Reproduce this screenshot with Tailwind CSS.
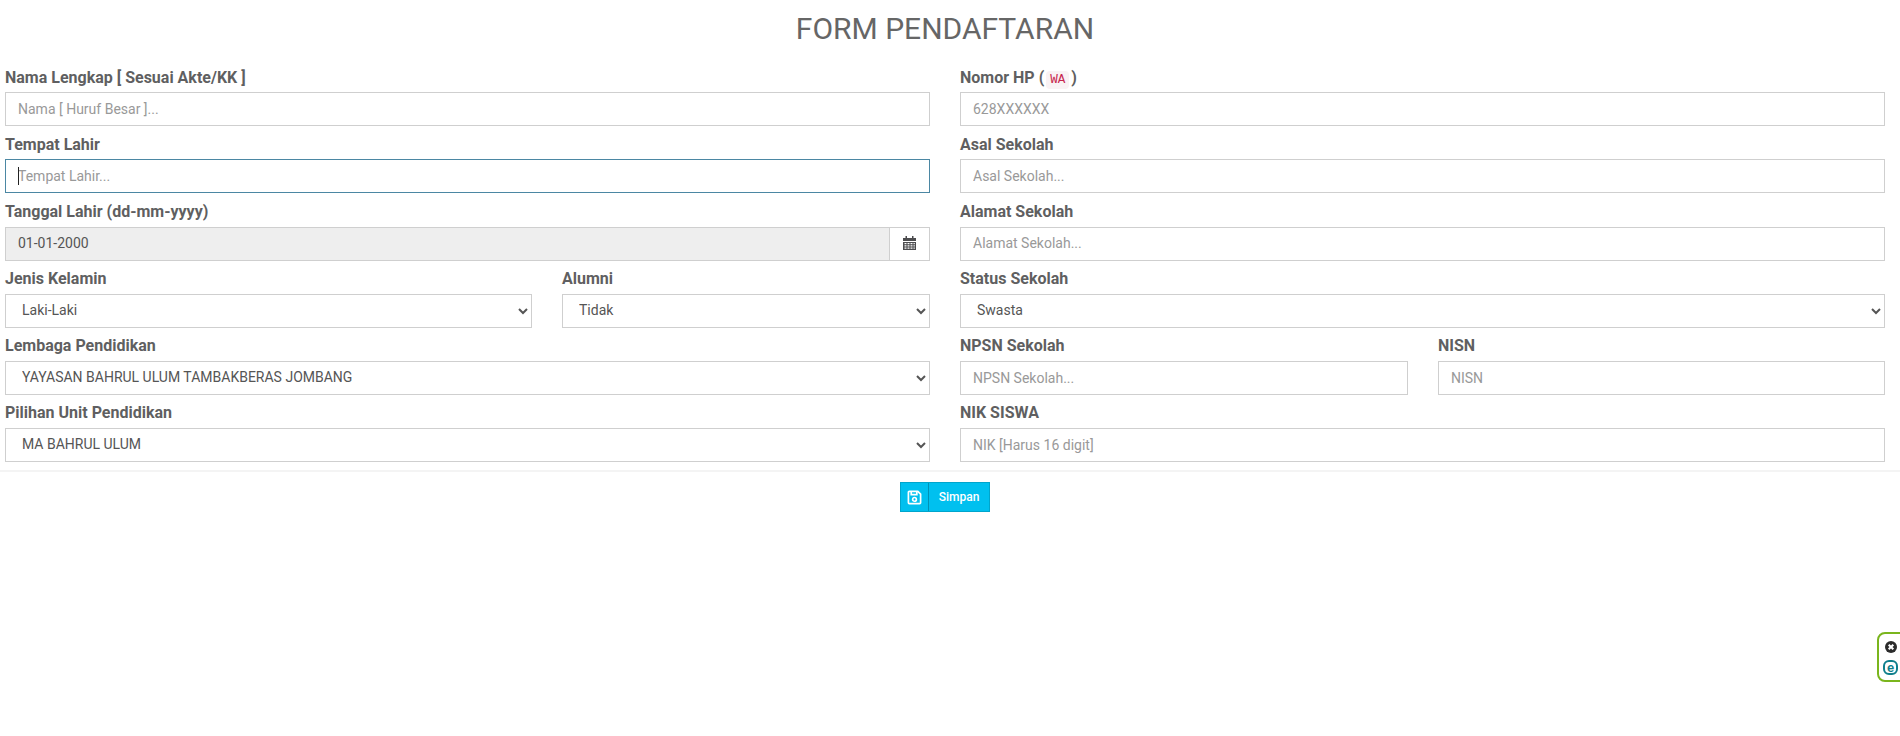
<!DOCTYPE html>
<html lang="en">

<head>
    <meta charset="UTF-8">
    <meta name="viewport" content="width=device-width, initial-scale=1.0">
    <title>Form Pendaftaran</title>
    <script src="https://cdn.jsdelivr.net/npm/@tailwindcss/browser@4"></script>
</head>

<body class="relative h-[736px] overflow-hidden bg-white font-['Roboto',sans-serif] text-[#5f5f61]">
    <h1 class="h-[59px] pr-[10px] pt-[9px] text-center text-[30px] leading-[39px] font-normal text-[#666]">FORM PENDAFTARAN</h1>

    <form class="grid grid-cols-[925px_925px] gap-x-[30px] pl-[5px]">
        <!-- left column -->
        <div>
            <div class="h-[67.2px]">
                <label class="block h-[33.2px] pt-[9px] text-[16px] leading-[20px] font-bold">Nama Lengkap [ Sesuai Akte/KK ]</label>
                <input type="text" placeholder="Nama [ Huruf Besar ]..." class="block h-[34px] w-full border border-[#cfcfcf] bg-white px-[12px] text-[14px] placeholder:text-[#999] outline-none">
            </div>
            <div class="h-[67.2px]">
                <label class="block h-[33.2px] pt-[9px] text-[16px] leading-[20px] font-bold">Tempat Lahir</label>
                <div class="relative">
                    <input type="text" placeholder="Tempat Lahir..." class="block h-[34px] w-full border border-[#4b87a3] bg-white px-[12px] text-[14px] placeholder:text-[#999] outline-none">
                    <span class="absolute top-[8px] left-[13px] h-[18px] w-px bg-[#222]"></span>
                </div>
            </div>
            <div class="h-[67.2px]">
                <label class="block h-[33.2px] pt-[9px] text-[16px] leading-[20px] font-bold">Tanggal Lahir (dd-mm-yyyy)</label>
                <div class="flex h-[34px]">
                    <input type="text" value="01-01-2000" readonly class="h-full min-w-0 flex-1 border border-r-0 border-[#cfcfcf] bg-[#eee] px-[12px] pb-[2px] text-[14px] text-[#555] outline-none">
                    <span class="flex h-full w-[41px] items-center justify-center border border-[#cfcfcf] bg-white pb-[2px]">
                        <svg width="13" height="14" viewBox="0 0 13 14" fill="#4c4c4e">
                            <path d="M2.5 0h1.5v2h5V0h1.5v2H13v3H0V2h2.5zM0 6h13v8H0zm1.5 1v1.3h2V7zm3 0v1.3h2V7zm3 0v1.3h2V7zm3 0v1.3h1.3V7zm-9 2.3v1.3h2V9.3zm3 0v1.3h2V9.3zm3 0v1.3h2V9.3zm3 0v1.3h1.3V9.3zm-9 2.3v1.2h2v-1.2zm3 0v1.2h2v-1.2zm3 0v1.2h2v-1.2zm3 0v1.2h1.3v-1.2z" fill-rule="evenodd" />
                        </svg>
                    </span>
                </div>
            </div>
            <div class="grid h-[67.2px] grid-cols-[527px_368px] gap-x-[30px]">
                <div>
                    <label class="block h-[33.2px] pt-[8px] text-[16px] leading-[20px] font-bold">Jenis Kelamin</label>
                    <select class="block h-[34px] w-full border border-[#cfcfcf] bg-white px-[12px] pb-[2px] text-[14px] text-[#555] outline-none">
                        <option>Laki-Laki</option>
                    </select>
                </div>
                <div>
                    <label class="block h-[33.2px] pt-[8px] text-[16px] leading-[20px] font-bold">Alumni</label>
                    <select class="block h-[34px] w-full border border-[#cfcfcf] bg-white px-[12px] pb-[2px] text-[14px] text-[#555] outline-none">
                        <option>Tidak</option>
                    </select>
                </div>
            </div>
            <div class="h-[67.2px]">
                <label class="block h-[33.2px] pt-[8px] text-[16px] leading-[20px] font-bold">Lembaga Pendidikan</label>
                <select class="block h-[34px] w-full border border-[#cfcfcf] bg-white px-[12px] pb-[2px] text-[14px] text-[#555] outline-none">
                    <option>YAYASAN BAHRUL ULUM TAMBAKBERAS JOMBANG</option>
                </select>
            </div>
            <div class="h-[67.2px]">
                <label class="block h-[33.2px] pt-[8px] text-[16px] leading-[20px] font-bold">Pilihan Unit Pendidikan</label>
                <select class="block h-[34px] w-full border border-[#cfcfcf] bg-white px-[12px] pb-[2px] text-[14px] text-[#555] outline-none">
                    <option>MA BAHRUL ULUM</option>
                </select>
            </div>
        </div>

        <!-- right column -->
        <div>
            <div class="h-[67.2px]">
                <label class="block h-[33.2px] pt-[9px] text-[16px] leading-[20px] font-bold">Nomor HP ( <code class="-mx-[2px] rounded-[4px] bg-[#f9f2f4] px-[4px] py-[2px] font-['Liberation_Mono',monospace] text-[12.6px] font-normal text-[#c7254e]">WA</code> )</label>
                <input type="text" placeholder="628XXXXXX" class="block h-[34px] w-full border border-[#cfcfcf] bg-white px-[12px] text-[14px] placeholder:text-[#999] outline-none">
            </div>
            <div class="h-[67.2px]">
                <label class="block h-[33.2px] pt-[9px] text-[16px] leading-[20px] font-bold">Asal Sekolah</label>
                <input type="text" placeholder="Asal Sekolah..." class="block h-[34px] w-full border border-[#cfcfcf] bg-white px-[12px] text-[14px] placeholder:text-[#999] outline-none">
            </div>
            <div class="h-[67.2px]">
                <label class="block h-[33.2px] pt-[9px] text-[16px] leading-[20px] font-bold">Alamat Sekolah</label>
                <input type="text" placeholder="Alamat Sekolah..." class="block h-[34px] w-full border border-[#cfcfcf] bg-white px-[12px] pb-[2px] text-[14px] placeholder:text-[#999] outline-none">
            </div>
            <div class="h-[67.2px]">
                <label class="block h-[33.2px] pt-[8px] text-[16px] leading-[20px] font-bold">Status Sekolah</label>
                <select class="block h-[34px] w-full border border-[#cfcfcf] bg-white px-[12px] pb-[2px] text-[14px] text-[#555] outline-none">
                    <option>Swasta</option>
                </select>
            </div>
            <div class="grid h-[67.2px] grid-cols-[448px_447px] gap-x-[30px]">
                <div>
                    <label class="block h-[33.2px] pt-[8px] text-[16px] leading-[20px] font-bold">NPSN Sekolah</label>
                    <input type="text" placeholder="NPSN Sekolah..." class="block h-[34px] w-full border border-[#cfcfcf] bg-white px-[12px] text-[14px] placeholder:text-[#999] outline-none">
                </div>
                <div>
                    <label class="block h-[33.2px] pt-[8px] text-[16px] leading-[20px] font-bold">NISN</label>
                    <input type="text" placeholder="NISN" class="block h-[34px] w-full border border-[#cfcfcf] bg-white px-[12px] text-[14px] placeholder:text-[#999] outline-none">
                </div>
            </div>
            <div class="h-[67.2px]">
                <label class="block h-[33.2px] pt-[8px] text-[16px] leading-[20px] font-bold">NIK SISWA</label>
                <input type="text" placeholder="NIK [Harus 16 digit]" class="block h-[34px] w-full border border-[#cfcfcf] bg-white px-[12px] text-[14px] placeholder:text-[#999] outline-none">
            </div>
        </div>
    </form>

    <div class="mt-[8px] flex justify-center border-t-2 border-[#f4f4f4] pt-[10px] pr-[10px]">
        <button type="button" class="flex h-[30px] w-[90px] border border-[#00a5cc] bg-[#00c0ef] text-[12px] font-medium text-white">
            <span class="flex h-full w-[28px] items-center justify-center border-r border-[#0092b5]">
                <svg width="15" height="15" viewBox="0 0 16 16" fill="none" stroke="#fff" stroke-width="1.8">
                    <path d="M1.5 2.5a1 1 0 0 1 1-1h9l3 3v9a1 1 0 0 1-1 1h-11a1 1 0 0 1-1-1z" />
                    <path d="M4.5 1.5v3.5h6v-3.5" />
                    <circle cx="8" cy="10" r="2" />
                </svg>
            </span>
            <span class="flex-1 leading-[28px]">Simpan</span>
        </button>
    </div>

    <!-- floating widget at the right edge -->
    <div class="absolute top-[632px] left-[1877px] flex h-[50px] w-[40px] flex-col rounded-[8px] border-2 border-[#7ab51d] bg-white pt-[7px] pl-[4px]">
        <svg class="ml-[2px]" width="12" height="12" viewBox="0 0 14 14">
            <circle cx="7" cy="7" r="7" fill="#2b2b2b" />
            <path d="M4.3 4.3l5.4 5.4M9.7 4.3l-5.4 5.4" stroke="#fff" stroke-width="2.4" />
        </svg>
        <span class="mt-[7px] flex h-[15px] w-[15px] items-center justify-center rounded-[6px] border-2 border-[#0f7f8c] font-['Liberation_Sans',sans-serif] text-[13px] leading-none font-bold text-[#0f7f8c]">e</span>
    </div>
</body>

</html>
